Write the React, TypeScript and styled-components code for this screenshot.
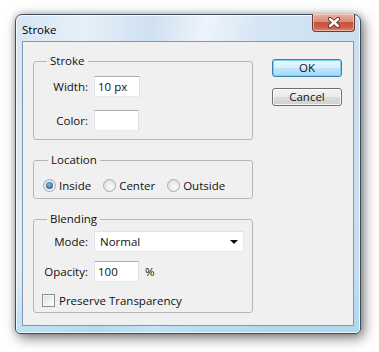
import React from 'react';
import styled, { createGlobalStyle } from 'styled-components';

const GlobalStyle = createGlobalStyle`
  html, body {
    margin: 0;
    padding: 0;
    background: #ffffff;
  }
  body {
    width: 379px;
    height: 352px;
    overflow: hidden;
    font-family: 'Open Sans', 'DejaVu Sans', sans-serif;
    font-size: 11.5px;
    color: #111;
  }
`;

const Page = styled.div`
  padding: 14px 0 0 15px;
`;

const Window = styled.div`
  width: 346px;
  height: 320px;
  box-sizing: border-box;
  display: flex;
  flex-direction: column;
  padding: 0 6px 7px;
  border: 1px solid #3f4e5c;
  border-radius: 7px 7px 5px 5px;
  background:
    linear-gradient(to bottom, rgba(255, 255, 255, 0) 80%, rgba(150, 212, 238, 0.55) 100%),
    linear-gradient(100deg, #d6e5f3 0%, #e7f0f9 18%, #cfe0f0 34%, #edf4fb 48%, #d5e5f3 62%, #c6dcef 100%);
  box-shadow:
    inset 0 0 0 1px rgba(255, 255, 255, 0.75),
    3px 4px 13px rgba(0, 0, 0, 0.5),
    0 0 7px rgba(0, 0, 0, 0.22);
`;

const TitleBar = styled.div`
  height: 26px;
  display: flex;
  justify-content: space-between;
  align-items: flex-start;
`;

const Title = styled.div`
  font-size: 11.5px;
  line-height: 26px;
  padding-top: 2px;
  color: #000;
`;

const CloseButton = styled.div`
  width: 43px;
  height: 18px;
  box-sizing: border-box;
  margin: -1px -1px 0 0;
  display: flex;
  align-items: center;
  justify-content: center;
  border: 1px solid #6b3a33;
  border-top: none;
  border-radius: 0 0 4px 4px;
  background: linear-gradient(to bottom, #e9b1a6 0%, #d98b7b 45%, #c7523e 50%, #cf6048 80%, #dc8a72 100%);
  box-shadow: inset 0 0 0 1px rgba(255, 225, 215, 0.55);
`;

const Client = styled.div`
  flex: 1;
  display: flex;
  gap: 19px;
  padding: 13px 0 0 10px;
  background: #f0f0f0;
  border: 1px solid #8398ad;
`;

const LeftColumn = styled.div`
  width: 220px;
  display: flex;
  flex-direction: column;
  gap: 14px;
`;

const Group = styled.fieldset<{ $pad: string }>`
  margin: 0;
  padding: ${({ $pad }) => $pad};
  min-width: 0;
  border: 1px solid #b6b6b6;
  border-radius: 3px;
  display: flex;
  flex-direction: column;
`;

const Legend = styled.legend`
  padding: 0 3px;
  margin-left: 5px;
  line-height: 12px;
`;

const Row = styled.div<{ $gap?: number }>`
  display: flex;
  align-items: center;
  gap: ${({ $gap }) => $gap ?? 6}px;
`;

const Label = styled.span`
  width: 46px;
  flex: none;
  text-align: right;
  white-space: nowrap;
`;

const TextBox = styled.input<{ $w: number }>`
  width: ${({ $w }) => $w}px;
  height: 21px;
  box-sizing: border-box;
  margin: 0;
  padding: 0 3px;
  font: inherit;
  color: #111;
  background: #fff;
  border: 1px solid;
  border-color: #abadb3 #dbdfe6 #e3e9ef #e2e3ea;
  outline: none;
`;

const Select = styled.div`
  width: 150px;
  height: 21px;
  box-sizing: border-box;
  display: flex;
  align-items: center;
  justify-content: space-between;
  padding: 0 5px 0 5px;
  background: #fff;
  border: 1px solid;
  border-color: #e2e3ea #e3e9ef #e3e9ef #e2e3ea;
`;

const Arrow = styled.span`
  width: 0;
  height: 0;
  border-left: 4px solid transparent;
  border-right: 4px solid transparent;
  border-top: 4px solid #111;
  margin-top: 1px;
`;

const RadioRow = styled.div`
  height: 15px;
  display: flex;
  align-items: center;
  gap: 12px;
`;

const Choice = styled.label`
  display: flex;
  align-items: center;
  gap: 3px;
`;

const Radio = styled.span<{ $on?: boolean }>`
  width: 13px;
  height: 13px;
  box-sizing: border-box;
  border-radius: 50%;
  border: 1px solid #a8abaf;
  background: radial-gradient(circle at 60% 65%, #fafafa 0%, #e6e6e6 60%, #d2d2d2 100%);
  display: flex;
  align-items: center;
  justify-content: center;

  &::after {
    content: '';
    display: ${({ $on }) => ($on ? 'block' : 'none')};
    width: 7px;
    height: 7px;
    border-radius: 50%;
    background: radial-gradient(circle at 45% 40%, #8fbfe2 0%, #3a76a8 55%, #24507a 100%);
  }
`;

const CheckBox = styled.span`
  width: 13px;
  height: 13px;
  box-sizing: border-box;
  border: 1px solid #8f8f8f;
  background: linear-gradient(135deg, #dcdcdc 0%, #f4f4f4 60%, #ffffff 100%);
  box-shadow: inset 0 0 0 1px #f6f6f6;
`;

const ButtonColumn = styled.div`
  display: flex;
  flex-direction: column;
  gap: 11px;
  padding-top: 4px;
`;

const Button = styled.button<{ $primary?: boolean }>`
  width: 70px;
  height: 18px;
  box-sizing: border-box;
  margin: 0;
  padding: 0;
  font: inherit;
  line-height: 14px;
  color: #111;
  border-radius: 3px;
  border: 1px solid ${({ $primary }) => ($primary ? '#3c7fb1' : '#707070')};
  background: ${({ $primary }) =>
    $primary
      ? 'linear-gradient(to bottom, #eaf6fd 0%, #d9f0fc 50%, #bee6fd 50%, #a7d9f5 100%)'
      : 'linear-gradient(to bottom, #f2f2f2 0%, #ebebeb 50%, #dddddd 50%, #cfcfcf 100%)'};
  box-shadow: ${({ $primary }) =>
    $primary ? 'inset 0 0 0 1px #7ad1f4' : 'inset 0 0 0 1px rgba(255,255,255,0.8)'};
`;

const CloseGlyph = () => (
  <svg width="14" height="11" viewBox="0 0 14 11">
    <path d="M3 2 L11 9 M11 2 L3 9" stroke="#5a2a22" strokeWidth="4.2" strokeLinecap="round" />
    <path d="M3 2 L11 9 M11 2 L3 9" stroke="#ffffff" strokeWidth="2.4" strokeLinecap="round" />
  </svg>
);

export default function App() {
  return (
    <Page>
      <GlobalStyle />
      <Window>
        <TitleBar>
          <Title>Stroke</Title>
          <CloseButton>
            <CloseGlyph />
          </CloseButton>
        </TitleBar>
        <Client>
          <LeftColumn>
            <Group $pad="9px 8px 8px">
              <Legend>Stroke</Legend>
              <Row>
                <Label>Width:</Label>
                <TextBox $w={46} defaultValue="10 px" />
              </Row>
              <Row style={{ marginTop: 13 }}>
                <Label>Color:</Label>
                <TextBox $w={45} defaultValue="" />
              </Row>
            </Group>
            <Group $pad="12px 8px 5px 9px">
              <Legend>Location</Legend>
              <RadioRow>
                <Choice>
                  <Radio $on />
                  Inside
                </Choice>
                <Choice>
                  <Radio />
                  Center
                </Choice>
                <Choice>
                  <Radio />
                  Outside
                </Choice>
              </RadioRow>
            </Group>
            <Group $pad="6px 8px 4px">
              <Legend>Blending</Legend>
              <Row>
                <Label>Mode:</Label>
                <Select>
                  Normal
                  <Arrow />
                </Select>
              </Row>
              <Row style={{ marginTop: 9 }}>
                <Label>Opacity:</Label>
                <TextBox $w={45} defaultValue="100" />
                <span>%</span>
              </Row>
              <Row $gap={4} style={{ marginTop: 10, height: 16 }}>
                <CheckBox />
                <span>Preserve Transparency</span>
              </Row>
            </Group>
          </LeftColumn>
          <ButtonColumn>
            <Button $primary>OK</Button>
            <Button>Cancel</Button>
          </ButtonColumn>
        </Client>
      </Window>
    </Page>
  );
}
